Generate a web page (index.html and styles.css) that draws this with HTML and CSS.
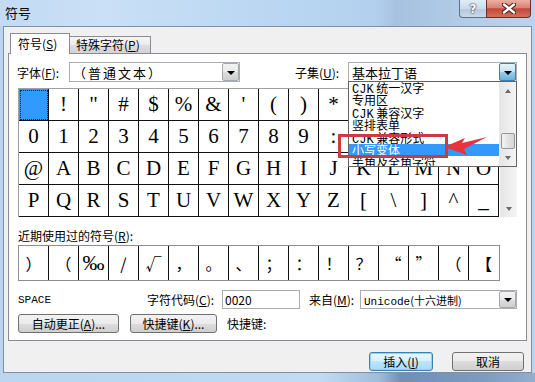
FILE: index.html
```html
<!DOCTYPE html>
<html lang="zh-CN">
<head>
    <meta charset="UTF-8">
    <title>符号</title>
    <link rel="stylesheet" href="styles.css">
</head>
<body>

<div class="window">
    <div class="titlebar">
        <span class="title">符号</span>
        <div class="caps">
            <span class="cap help">?</span>
            <span class="cap close">
                <svg width="14" height="11" viewBox="0 0 14 11">
                    <path d="M2 1.5 L12 9.5 M12 1.5 L2 9.5" stroke="#4a1f1b" stroke-width="4.5" stroke-linecap="round"/>
                    <path d="M2 1.5 L12 9.5 M12 1.5 L2 9.5" stroke="#fff" stroke-width="2.4" stroke-linecap="round"/>
                </svg>
            </span>
        </div>
    </div>

    <div class="client">
        <div class="tabs">
            <span class="tab active">符号(<u>S</u>)</span>
            <span class="tab">特殊字符(<u>P</u>)</span>
        </div>

        <div class="panel">
            <div class="font-row">
                <span class="lbl lbl-font">字体(<u>F</u>):</span>
                <div class="combo combo-font">
                    <span class="combo-text wide">（普通文本）</span>
                    <span class="drop"></span>
                </div>
                <span class="lbl lbl-subset">子集(<u>U</u>):</span>
                <div class="combo combo-subset">
                    <span class="combo-text">基本拉丁语</span>
                    <span class="drop open"></span>
                    <div class="dropdown">
                        <ul class="items">
                            <li><span class="mono">CJK</span> 统一汉字</li>
                            <li>专用区</li>
                            <li><span class="mono">CJK</span> 兼容汉字</li>
                            <li>竖排表单</li>
                            <li><span class="mono">CJK</span> 兼容形式</li>
                            <li class="hl">小写变体</li>
                            <li>半角及全角字符</li>
                        </ul>
                        <div class="vscroll">
                            <span class="arrow up"></span>
                            <span class="thumb"></span>
                            <span class="arrow down"></span>
                        </div>
                    </div>
                </div>
            </div>

            <div class="chars">
                <div class="char-grid">
                    <span class="cell sel"></span><span class="cell">!</span><span class="cell">"</span><span class="cell">#</span>
                    <span class="cell">$</span><span class="cell">%</span><span class="cell">&amp;</span><span class="cell">'</span>
                    <span class="cell">(</span><span class="cell">)</span><span class="cell">*</span><span class="cell">+</span>
                    <span class="cell">,</span><span class="cell">-</span><span class="cell">.</span><span class="cell">/</span>

                    <span class="cell">0</span><span class="cell">1</span><span class="cell">2</span><span class="cell">3</span>
                    <span class="cell">4</span><span class="cell">5</span><span class="cell">6</span><span class="cell">7</span>
                    <span class="cell">8</span><span class="cell">9</span><span class="cell">:</span><span class="cell">;</span>
                    <span class="cell">&lt;</span><span class="cell">=</span><span class="cell">&gt;</span><span class="cell">?</span>

                    <span class="cell">@</span><span class="cell">A</span><span class="cell">B</span><span class="cell">C</span>
                    <span class="cell">D</span><span class="cell">E</span><span class="cell">F</span><span class="cell">G</span>
                    <span class="cell">H</span><span class="cell">I</span><span class="cell">J</span><span class="cell">K</span>
                    <span class="cell">L</span><span class="cell">M</span><span class="cell">N</span><span class="cell">O</span>

                    <span class="cell">P</span><span class="cell">Q</span><span class="cell">R</span><span class="cell">S</span>
                    <span class="cell">T</span><span class="cell">U</span><span class="cell">V</span><span class="cell">W</span>
                    <span class="cell">X</span><span class="cell">Y</span><span class="cell">Z</span><span class="cell">[</span>
                    <span class="cell">\</span><span class="cell">]</span><span class="cell">^</span><span class="cell">_</span>
                </div>
                <div class="vscroll">
                    <span class="arrow up"></span>
                    <span class="arrow down"></span>
                </div>
            </div>

            <div class="recent-label">近期使用过的符号(<u>R</u>):</div>
            <div class="recent">
                <span class="rc">）</span><span class="rc">（</span><span class="rc permille">‰</span><span class="rc">/</span>
                <span class="rc">√</span><span class="rc">，</span><span class="rc">。</span><span class="rc">、</span>
                <span class="rc">；</span><span class="rc">：</span><span class="rc">！</span><span class="rc">？</span>
                <span class="rc">“</span><span class="rc">”</span><span class="rc">（</span><span class="rc">【</span>
            </div>

            <div class="code-row">
                <span class="space-name">SPACE</span>
                <span class="lbl lbl-code">字符代码(<u>C</u>):</span>
                <span class="input">0020</span>
                <span class="lbl lbl-from">来自(<u>M</u>):</span>
                <div class="combo combo-from">
                    <span class="combo-text"><span class="mono">Unicode</span>(十六进制)</span>
                    <span class="drop"></span>
                </div>
            </div>

            <div class="btn-row">
                <button class="btn btn-auto">自动更正(<u>A</u>)...</button>
                <button class="btn btn-key">快捷键(<u>K</u>)...</button>
                <span class="lbl lbl-key">快捷键:</span>
            </div>
        </div>

        <div class="actions">
            <button class="btn btn-insert">插入(<u>I</u>)</button>
            <button class="btn btn-cancel">取消</button>
        </div>
    </div>

    <div class="frame-bottom"></div>

    <!-- red marks drawn over the screenshot -->
    <svg class="marks" width="535" height="382" viewBox="0 0 535 382">
        <rect x="339.5" y="135.5" width="107" height="21" fill="none" stroke="#cf3a40" stroke-width="3"/>
        <polygon points="444,147 465,138 462,143 487,137 464,149 467,155" fill="#e8323c"/>
    </svg>
</div>

</body>
</html>
```

FILE: styles.css
```css
* {
    margin: 0;
    padding: 0;
    box-sizing: border-box;
}

body {
    width: 535px;
    height: 382px;
    overflow: hidden;
    font-family: "Noto Sans CJK SC", sans-serif;
    font-size: 12px;
    color: #000;
}

u {
    text-decoration: underline;
}

.mono {
    font-family: "Liberation Mono", "Noto Sans CJK SC", monospace;
}

.window {
    position: relative;
    width: 535px;
    height: 382px;
    display: flex;
    flex-direction: column;
    padding: 0 3px;
    background: #bcd5ee;
}

/* title bar */
.titlebar {
    height: 26px;
    margin: 0 -3px;
    padding: 0 4px 0 5px;
    display: flex;
    justify-content: space-between;
    align-items: flex-start;
    background: linear-gradient(90deg, #c3dbf3 0%, #c9e0f6 20%, #b8d5f1 55%, #b3d0ee 70%, #a6c2e0 74%, #b0cae6 84%, #bcd3ec 100%);
}

.title {
    padding-top: 4px;
    font-size: 13px;
    line-height: 18px;
}

.caps {
    display: flex;
}

.cap {
    height: 18px;
    display: flex;
    align-items: center;
    justify-content: center;
    border: 1px solid #5f7089;
    border-top: none;
}

.help {
    width: 27px;
    border-right: none;
    border-radius: 0 0 0 4px;
    background: linear-gradient(#e3ecf6, #cddbea 50%, #b6c8dd 51%, #c9d9ea);
    color: #fff;
    font-family: "DejaVu Sans", sans-serif;
    font-size: 12px;
    font-weight: bold;
    text-shadow: 0 0 2px #1e2c3e, 0 0 1px #1e2c3e;
}

.close {
    width: 45px;
    border-color: #6b2f2a;
    border-radius: 0 0 4px 0;
    background: linear-gradient(#eab0a2, #d98373 45%, #c3463a 52%, #d2705d 100%);
}

/* client area */
.client {
    flex: 1;
    display: flex;
    flex-direction: column;
    background: #f0f0f0;
    border: 1px solid #7d90a8;
    padding: 6px 4px 0;
}

.tabs {
    display: flex;
    align-items: flex-end;
    height: 20px;
    padding-left: 2px;
    position: relative;
    z-index: 1;
}

.tab {
    width: 81px;
    height: 17px;
    padding-left: 6px;
    line-height: 16px;
    border: 1px solid #898c95;
    border-bottom: none;
    border-left: none;
    background: linear-gradient(#f4f4f4, #ececec 50%, #dedede 50%, #d3d3d3);
}

.tab.active {
    width: 60px;
    height: 21px;
    margin-bottom: -1px;
    padding-left: 7px;
    line-height: 19px;
    border-left: 1px solid #898c95;
    background: #fff;
}

.panel {
    background: #fff;
    border: 1px solid #898c95;
    padding: 8px 9px 7px;
}

.font-row {
    display: flex;
    align-items: center;
    height: 20px;
}

.lbl-font {
    width: 51px;
    margin-left: -1px;
    margin-right: 1px;
}

.lbl-subset {
    margin-left: auto;
    width: 53px;
}

.combo {
    position: relative;
    height: 20px;
    display: flex;
    align-items: center;
    background: #fff;
    border: 1px solid #abadb3;
}

.combo-text {
    padding-left: 3px;
    font-size: 13px;
    white-space: nowrap;
}

.combo-text.wide {
    letter-spacing: 2px;
}

.combo-font {
    width: 171px;
}

.combo-subset {
    width: 169px;
}

.drop {
    margin-left: auto;
    width: 17px;
    height: 18px;
    display: flex;
    align-items: center;
    justify-content: center;
    border: 1px solid #a5a9b0;
    border-radius: 2px;
    background: linear-gradient(#f2f2f2, #ebebeb 50%, #dddddd 50%, #cfcfcf);
}

.drop::before {
    content: "";
    border-left: 4px solid transparent;
    border-right: 4px solid transparent;
    border-top: 4px solid #000;
    margin-top: 1px;
}

.drop.open {
    border-color: #3c7fb1;
    background: linear-gradient(#e5f4fc, #c4e5f6 50%, #98d1ef 50%, #68b3db);
}

.dropdown {
    position: absolute;
    top: 100%;
    left: -1px;
    right: -1px;
    height: 86px;
    display: flex;
    background: #fff;
    border: 1px solid #646464;
    z-index: 3;
}

.items {
    flex: 1;
    list-style: none;
    overflow: hidden;
    font-size: 12px;
}

.items li {
    height: 12.4px;
    line-height: 12.4px;
    padding-left: 3px;
    white-space: nowrap;
}

.items li.hl {
    background: #3399ff;
    color: #fff;
}

/* scroll bars */
.vscroll {
    width: 17px;
    display: flex;
    flex-direction: column;
    justify-content: space-between;
    background: linear-gradient(90deg, #e6e6e6, #f4f4f4);
    border-left: 1px solid #e8e8e8;
}

.dropdown .vscroll {
    justify-content: flex-end;
}

.arrow {
    height: 17px;
    display: flex;
    align-items: center;
    justify-content: center;
}

.arrow.up::before,
.arrow.down::before {
    content: "";
    border-left: 3px solid transparent;
    border-right: 3px solid transparent;
}

.arrow.up::before {
    border-bottom: 4px solid #6a6a6a;
}

.arrow.down::before {
    border-top: 4px solid #6a6a6a;
}

.dropdown .arrow.up {
    margin-bottom: auto;
}

.thumb {
    height: 16px;
    margin: 0 1px;
    border: 1px solid #979797;
    border-radius: 2px;
    background: linear-gradient(90deg, #f4f4f4, #e2e2e2 50%, #d6d6d6);
}

/* character table */
.chars {
    display: flex;
    margin-top: 6px;
    height: 129px;
}

.char-grid {
    width: 482px;
    display: grid;
    grid-template-columns: repeat(16, 30px);
    grid-auto-rows: 32px;
    border-left: 1px solid #a0a0a0;
    border-top: 1px solid #a0a0a0;
}

.cell {
    display: flex;
    align-items: center;
    justify-content: center;
    border-right: 1px solid #111;
    border-bottom: 1px solid #111;
    font-family: "Liberation Serif", serif;
    font-size: 21px;
}

.cell.sel {
    background: #3399ff;
    outline: 1px dotted #222;
    outline-offset: -2px;
}

.recent-label {
    margin-top: 12px;
    height: 14px;
    line-height: 14px;
}

.recent {
    width: 482px;
    height: 36px;
    margin-top: 2px;
    display: grid;
    grid-template-columns: repeat(16, 30px);
    border: 1px solid #8e8e8e;
}

.rc {
    display: flex;
    align-items: center;
    justify-content: center;
    border-right: 1px solid #111;
    font-size: 16px;
}

.rc:last-child {
    border-right: none;
}

.rc.permille {
    font-family: "Liberation Serif", serif;
    font-size: 22px;
}

/* code row */
.code-row {
    display: flex;
    align-items: center;
    height: 19px;
    margin-top: 9px;
}

.space-name {
    width: 129px;
    font-family: "Liberation Mono", monospace;
    font-size: 11px;
}

.lbl-code {
    width: 75px;
}

.input {
    width: 78px;
    height: 19px;
    padding-left: 2px;
    line-height: 17px;
    border: 1px solid #abadb3;
}

.lbl-from {
    width: 51px;
    margin-left: 9px;
}

.combo-from {
    width: 157px;
    height: 19px;
}

.combo-from .combo-text {
    font-size: 11px;
}

.combo-from .drop {
    height: 17px;
}

/* buttons */
.btn-row {
    display: flex;
    align-items: center;
    height: 19px;
    margin-top: 5px;
}

.btn {
    height: 19px;
    font-family: "Noto Sans CJK SC", sans-serif;
    font-size: 12px;
    line-height: 16px;
    color: #000;
    border: 1px solid #707070;
    border-radius: 3px;
    background: linear-gradient(#f2f2f2, #ebebeb 50%, #dddddd 50%, #cfcfcf);
}

.btn-auto {
    width: 101px;
}

.btn-key {
    width: 87px;
    margin-left: 11px;
}

.lbl-key {
    margin-left: 10px;
}

.actions {
    display: flex;
    justify-content: flex-end;
    gap: 19px;
    margin-top: 11px;
    padding-right: 3px;
}

.btn-insert {
    width: 64px;
    border-color: #3c7fb1;
    background: linear-gradient(#eaf6fd, #d9f0fc 50%, #bee6fd 50%, #a7d9f5);
    box-shadow: inset 0 0 0 1px #8fd3f5;
}

.btn-cancel {
    width: 72px;
}

.frame-bottom {
    height: 9px;
    margin: 0 -3px;
    background: linear-gradient(90deg, #b9d5f0 0%, #c1dbf3 60%, #9fbbd9 71%, #6f8fb5 75%, #7d9bbf 90%, #93aecd 100%);
}

.marks {
    position: absolute;
    top: 0;
    left: 0;
    pointer-events: none;
    z-index: 5;
}
```
